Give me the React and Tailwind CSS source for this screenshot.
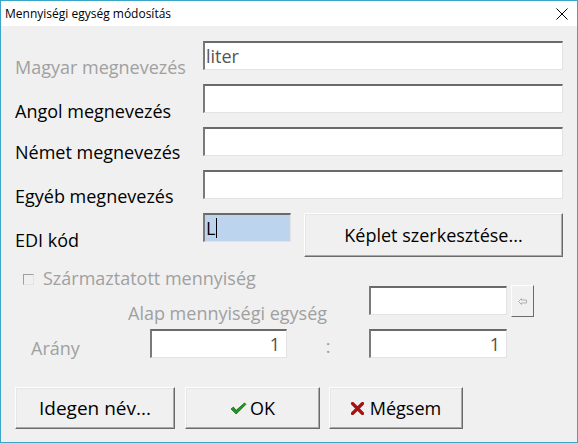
import React from "react";

const font = { fontFamily: '"Open Sans", "Noto Sans", "Liberation Sans", sans-serif' };

function Field({ className = "", value = "", right = false, children }) {
  return (
    <div
      className={`h-[29px] bg-white border-t-2 border-l-2 border-b border-r border-t-[#6a6a6a] border-l-[#7a7a7a] border-b-[#e3e3e3] border-r-[#e3e3e3] flex items-center px-[1px] text-[18px] leading-[24px] ${right ? "justify-end pr-[6px]" : ""} ${className}`}
    >
      {value}
      {children}
    </div>
  );
}

function Button({ className = "", children }) {
  return (
    <button
      className={`bg-[#f0f0f0] border border-t-[#fdfdfd] border-l-[#fdfdfd] border-r-[#6b6b6b] border-b-[#6b6b6b] shadow-[inset_-1px_-1px_0_#a9a9a9,inset_1px_1px_0_#e6e6e6] flex items-center justify-center gap-[3px] text-[18px] leading-[24px] text-black ${className}`}
    >
      {children}
    </button>
  );
}

export default function App() {
  return (
    <div
      className="w-[578px] h-[443px] border border-[#3aa6c8] bg-[#f0f0f0] flex flex-col overflow-hidden"
      style={font}
    >
      <div className="h-[25px] bg-white flex items-center justify-between pl-[4px] pr-[9px]">
        <span className="text-[12px] text-black">Mennyiségi egység módosítás</span>
        <svg width="12" height="12" viewBox="0 0 12 12">
          <path d="M0.5 0.5 L11.5 11.5 M11.5 0.5 L0.5 11.5" stroke="#000" strokeWidth="1" />
        </svg>
      </div>

      <div className="flex-1 pl-[14px] pr-[14px] pt-[15px] flex flex-col">
        <div className="flex flex-col gap-[14px]">
          <div className="flex h-[29px]">
            <span className="w-[188px] shrink-0 mt-[14px] text-[18px] leading-[24px] text-[#a0a0a0]">
              Magyar megnevezés
            </span>
            <Field className="flex-1 text-[#555]" value="liter" />
          </div>
          <div className="flex h-[29px]">
            <span className="w-[188px] shrink-0 mt-[15px] text-[18px] leading-[24px] text-black">
              Angol megnevezés
            </span>
            <Field className="flex-1" />
          </div>
          <div className="flex h-[29px]">
            <span className="w-[188px] shrink-0 mt-[13px] text-[18px] leading-[24px] text-black">
              Német megnevezés
            </span>
            <Field className="flex-1" />
          </div>
          <div className="flex h-[29px]">
            <span className="w-[188px] shrink-0 mt-[14px] text-[18px] leading-[24px] text-black">
              Egyéb megnevezés
            </span>
            <Field className="flex-1" />
          </div>
          <div className="flex h-[44px]">
            <span className="w-[188px] shrink-0 mt-[15px] text-[18px] leading-[24px] text-black">
              EDI kód
            </span>
            <Field className="w-[88px] !bg-[#bcd4ee] text-black" value="L">
              <span className="w-px h-[20px] bg-black ml-[1px]" />
            </Field>
            <Button className="ml-[13px] flex-1 h-[44px]">Képlet szerkesztése...</Button>
          </div>
        </div>

        <div className="flex items-start h-[19px] mt-[9px] pl-[8px] text-[18px] leading-[24px] text-[#a0a0a0]">
          <span className="w-[11px] h-[11px] mt-[8px] border border-t-[#a0a0a0] border-l-[#a0a0a0] border-r-[#e3e3e3] border-b-[#e3e3e3] bg-[#f0f0f0]" />
          <span className="ml-[9px]">Származtatott mennyiség</span>
        </div>

        <div className="flex h-[32px] items-start">
          <span className="ml-[113px] w-[241px] shrink-0 mt-[16px] text-[18px] leading-[24px] text-[#a0a0a0]">
            Alap mennyiségi egység
          </span>
          <Field className="w-[138px] mt-[1px]" />
          <button className="ml-[4px] w-[23px] h-[32px] bg-[#f0f0f0] border border-t-[#fdfdfd] border-l-[#fdfdfd] border-r-[#6b6b6b] border-b-[#6b6b6b] flex items-center justify-center">
            <svg width="9" height="7" viewBox="0 0 9 7">
              <path d="M0.5 3.5 L3.5 0.5 V2 H8.5 V5 H3.5 V6.5 Z" fill="none" stroke="#b0b0b0" strokeWidth="1" />
            </svg>
          </button>
        </div>

        <div className="flex h-[29px] mt-[12px]">
          <span className="ml-[16px] w-[119px] shrink-0 mt-[7px] text-[18px] leading-[24px] text-[#a0a0a0]">
            Arány
          </span>
          <Field className="w-[137px] text-[#505050]" value="1" right />
          <span className="w-[82px] shrink-0 text-center mt-[5px] text-[18px] leading-[24px] text-[#a0a0a0]">
            :
          </span>
          <Field className="w-[138px] text-[#505050]" value="1" right />
        </div>

        <div className="flex mt-[29px] h-[42px]">
          <Button className="w-[160px] h-[42px] text-[19px]">Idegen név...</Button>
          <Button className="ml-[10px] w-[135px] h-[42px]">
            <svg width="17" height="13" viewBox="0 0 18 14">
              <path d="M1 7.5 L3.5 5.5 L6.5 9 L15.5 1 L17 2.5 L6.5 13 Z" fill="#1f9a1f" stroke="#0e5a0e" strokeWidth="0.8" />
            </svg>
            OK
          </Button>
          <Button className="ml-[9px] w-[134px] h-[42px]">
            <svg width="13" height="13" viewBox="0 0 13 13">
              <path d="M1.5 1.5 L11.5 11.5 M11.5 1.5 L1.5 11.5" stroke="#a51212" strokeWidth="3.2" strokeLinecap="round" />
            </svg>
            <span className="ml-[3px]">Mégsem</span>
          </Button>
        </div>
      </div>
    </div>
  );
}
